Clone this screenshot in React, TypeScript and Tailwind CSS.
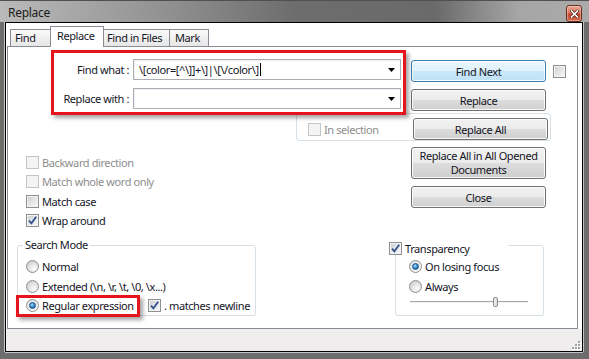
import React from "react";

function CheckBox({ checked = false, disabled = false }: { checked?: boolean; disabled?: boolean }) {
  return (
    <span
      className={
        disabled
          ? "relative block h-[13px] w-[13px] shrink-0 border border-[#c3c5c7] bg-[#f4f4f4]"
          : "relative block h-[13px] w-[13px] shrink-0 border border-[#8e8f8f] bg-[linear-gradient(135deg,#c6c9cd_0%,#e2e3e5_45%,#f8f8f8_100%)] shadow-[inset_0_0_0_1px_#f3f3f3]"
      }
    >
      {checked && (
        <svg className="absolute left-0 top-0" width="11" height="11" viewBox="0 0 11 11">
          <path d="M2 5.6 L4.4 8.4 L9.2 1.8" fill="none" stroke="#34508f" strokeWidth="1.8" />
        </svg>
      )}
    </span>
  );
}

function Radio({ checked = false }: { checked?: boolean }) {
  return (
    <span
      className={
        checked
          ? "flex h-[13px] w-[13px] shrink-0 items-center justify-center rounded-full border border-[#8e8f8f] bg-[radial-gradient(circle_at_60%_65%,#ffffff_0%,#eeeeee_55%,#d4d4d4_100%)]"
          : "flex h-[13px] w-[13px] shrink-0 items-center justify-center rounded-full border border-[#8e8f8f] bg-[radial-gradient(circle_at_65%_70%,#fdfdfd_0%,#e4e4e4_45%,#c4c4c4_100%)]"
      }
    >
      {checked && (
        <span className="block h-[7px] w-[7px] rounded-full border border-[#1b4c86] bg-[radial-gradient(circle_at_40%_35%,#b4e2fa_0%,#3b93d4_45%,#0f4a8a_100%)]" />
      )}
    </span>
  );
}

function Button({
  children,
  primary = false,
  tall = false,
  className = "",
}: {
  children: React.ReactNode;
  primary?: boolean;
  tall?: boolean;
  className?: string;
}) {
  const base =
    "flex w-[135px] shrink-0 flex-col items-center justify-center rounded-[3px] border text-center leading-[13px] text-[#15151f] shadow-[inset_0_0_0_1px_rgba(255,255,255,0.85)]";
  const h = tall ? "h-[32px]" : "h-[22px]";
  const skin = primary
    ? "border-[#3c7fb1] bg-[linear-gradient(#ebf6fd_0%,#dff1fb_50%,#cbe8f8_50%,#bfe2f5_100%)]"
    : "border-[#707070] bg-[linear-gradient(#f2f2f2_0%,#ebebeb_50%,#dddddd_50%,#cfcfcf_100%)]";
  return <div className={`${base} ${h} ${skin} ${className}`}>{children}</div>;
}

function Combo({ value, caret = false, className = "" }: { value: string; caret?: boolean; className?: string }) {
  return (
    <div
      className={`flex h-[21px] w-[268px] shrink-0 items-center border border-[#abadb3] bg-white pl-[5px] pr-[5px] shadow-[inset_1px_1px_0_#eef0f3] ${className}`}
    >
      <span className="whitespace-pre leading-[14px]">{value}</span>
      {caret && <span className="ml-[1px] block h-[13px] w-[1px] bg-black" />}
      <svg className="ml-auto" width="7" height="4" viewBox="0 0 7 4">
        <path d="M0 0 H7 L3.5 4 Z" fill="#000" />
      </svg>
    </div>
  );
}

function Grip() {
  const dots: [number, number][] = [
    [6, 0],
    [3, 3],
    [6, 3],
    [0, 6],
    [3, 6],
    [6, 6],
  ];
  return (
    <svg width="9" height="9" viewBox="0 0 9 9">
      {dots.map(([x, y], i) => (
        <g key={i}>
          <rect x={x + 1} y={y + 1} width="2" height="2" fill="#ffffff" />
          <rect x={x} y={y} width="2" height="2" fill="#a3a3a3" />
        </g>
      ))}
    </svg>
  );
}

export default function App() {
  return (
    <div className="flex h-[359px] w-[589px] flex-col overflow-hidden bg-[#6d6d6d] font-['Noto_Sans',sans-serif] text-[11px] tracking-[-0.4px] text-[#15151f]">
      {/* Title bar */}
      <div className="flex h-[22px] shrink-0 items-start border-t border-[#505050] bg-[linear-gradient(90deg,#bababa_0%,#8e8e8e_30%,#6d6d6d_50%,#6a6a6a_74%,#a6a6a6_88%,#aaaaaa_100%)]">
        <span className="ml-[8px] mt-[4px] text-[12px] leading-[15px] tracking-[-0.3px] text-[#1b1b1b]">Replace</span>
        <div className="ml-auto mr-[7px] mt-[4px] flex h-[17px] w-[16px] items-center justify-center rounded-[3px] border border-[#6b2a1e] bg-[linear-gradient(#e9a896_0%,#d6735a_45%,#c4452b_55%,#d86a4f_100%)] shadow-[inset_0_0_0_1px_rgba(255,255,255,0.35)]">
          <svg width="9" height="8" viewBox="0 0 9 8">
            <path d="M1.5 1 L7.5 7 M7.5 1 L1.5 7" stroke="#4a2018" strokeWidth="3" strokeLinecap="square" />
            <path d="M1.5 1 L7.5 7 M7.5 1 L1.5 7" stroke="#ffffff" strokeWidth="1.6" strokeLinecap="square" />
          </svg>
        </div>
      </div>

      {/* Client area */}
      <div className="ml-[5px] mr-[6px] flex h-[330px] shrink-0 flex-col border border-black bg-white shadow-[-1px_0_0_#c4c4c4,1px_0_0_#c4c4c4,0_1px_0_#c4c4c4]">
        {/* Tabs */}
        <div className="flex h-[23px] shrink-0 items-end pl-[4px]">
          <div className="flex h-[17px] w-[41px] items-center border-l border-r border-t border-[#898c95] bg-[linear-gradient(#fafafa,#e6e6e6)] pl-[4px] leading-[14px]">
            Find
          </div>
          <div className="relative z-10 -mb-px ml-[-1px] flex h-[21px] w-[54px] items-center border-l border-r border-t border-[#898c95] bg-white pb-[2px] pl-[6px] leading-[14px]">
            Replace
          </div>
          <div className="ml-[-1px] flex h-[17px] w-[67px] items-center border-l border-r border-t border-[#898c95] bg-[linear-gradient(#fafafa,#e6e6e6)] pl-[3px] leading-[14px]">
            Find in Files
          </div>
          <div className="ml-[-1px] flex h-[17px] w-[40px] items-center border-l border-r border-t border-[#898c95] bg-[linear-gradient(#fafafa,#e6e6e6)] pl-[5px] leading-[14px]">
            Mark
          </div>
        </div>

        {/* Panel */}
        <div className="relative ml-[1px] h-[283px] w-[571px] shrink-0 border border-[#898c95] bg-white">
          <div className="flex flex-col">
            {/* Row A */}
            <div className="mt-[12px] flex items-start">
              <div className="flex h-[21px] w-[121px] shrink-0 items-center justify-end leading-[14px]">Find what :</div>
              <Combo className="ml-[4px]" value={"\\[color=[^\\]]+\\]|\\[\\/color\\]"} caret />
              <Button primary className="ml-[10px] mt-[1px]">
                Find Next
              </Button>
              <div className="ml-[7px] mt-[6px]">
                <CheckBox />
              </div>
            </div>

            {/* Row B */}
            <div className="mt-[6px] flex items-start">
              <div className="flex h-[21px] w-[121px] shrink-0 items-center justify-end leading-[14px]">Replace with :</div>
              <Combo className="ml-[4px]" value="" />
              <Button className="ml-[10px] mt-[1px]">Replace</Button>
            </div>

            {/* Row C: In selection group */}
            <div className="ml-[288px] mt-[2px] flex h-[28px] w-[255px] items-start rounded-[3px] border border-[#d5dfe5] pl-[11px] pr-[2px]">
              <div className="mt-[9px] flex items-center">
                <CheckBox disabled />
                <span className="ml-[3px] leading-[13px] text-[#8d8d8d]">In selection</span>
              </div>
              <Button className="ml-auto mt-[4px]">Replace All</Button>
            </div>

            {/* Section 2 */}
            <div className="flex items-start">
              <div className="flex w-[403px] shrink-0 flex-col pl-[18px] pt-[15px]">
                <div className="flex h-[13px] items-center">
                  <CheckBox disabled />
                  <span className="ml-[3px] leading-[13px] text-[#8d8d8d]">Backward direction</span>
                </div>
                <div className="mt-[6px] flex h-[13px] items-center">
                  <CheckBox disabled />
                  <span className="ml-[3px] leading-[13px] text-[#8d8d8d]">Match whole word only</span>
                </div>
                <div className="mt-[7px] flex h-[13px] items-center">
                  <CheckBox />
                  <span className="ml-[3px] leading-[13px]">Match case</span>
                </div>
                <div className="mt-[6px] flex h-[13px] items-center">
                  <CheckBox checked />
                  <span className="ml-[3px] leading-[13px]">Wrap around</span>
                </div>
              </div>
              <div className="flex flex-col pt-[6px]">
                <Button tall>
                  <span className="block leading-[14px]">Replace All in All Opened</span>
                  <span className="block leading-[14px]">Documents</span>
                </Button>
                <Button className="mt-[7px]">Close</Button>
              </div>
            </div>

            {/* Section 3 */}
            <div className="mt-[18px] flex items-start">
              {/* Search Mode */}
              <div className="relative ml-[9px] h-[71px] w-[239px] shrink-0 rounded-[3px] border border-[#d5dfe5]">
                <span className="absolute left-[5px] top-[-8px] bg-white px-[2px] leading-[14px]">Search Mode</span>
                <div className="flex flex-col pl-[8px] pt-[14px]">
                  <div className="flex h-[13px] items-center">
                    <Radio />
                    <span className="ml-[3px] leading-[13px]">Normal</span>
                  </div>
                  <div className="mt-[7px] flex h-[13px] items-center">
                    <Radio />
                    <span className="ml-[3px] leading-[13px]">{"Extended (\\n, \\r, \\t, \\0, \\x...)"}</span>
                  </div>
                  <div className="mt-[6px] flex h-[13px] items-center">
                    <div className="flex w-[122px] shrink-0 items-center">
                      <Radio checked />
                      <span className="ml-[3px] leading-[13px]">Regular expression</span>
                    </div>
                    <CheckBox checked />
                    <span className="ml-[3px] leading-[13px]">. matches newline</span>
                  </div>
                </div>
              </div>

              {/* Transparency */}
              <div className="relative ml-[139px] h-[71px] w-[149px] shrink-0 rounded-[3px] border border-[#d5dfe5]">
                <div className="absolute left-[-7px] top-[-4px] flex h-[13px] w-[119px] items-center bg-white">
                  <CheckBox checked />
                  <span className="ml-[3px] leading-[13px]">Transparency</span>
                </div>
                <div className="flex flex-col pl-[13px] pt-[14px]">
                  <div className="flex h-[13px] items-center">
                    <Radio checked />
                    <span className="ml-[3px] leading-[13px]">On losing focus</span>
                  </div>
                  <div className="mt-[7px] flex h-[13px] items-center">
                    <Radio />
                    <span className="ml-[3px] leading-[13px]">Always</span>
                  </div>
                  <div className="relative ml-[1px] mt-[3px] h-[12px] w-[118px]">
                    <div className="absolute left-0 right-0 top-[5px] h-[2px] border-t border-[#a7a7a7] bg-[#f0f0f0]" />
                    <div className="absolute left-[83px] top-[1px] h-[10px] w-[5px] rounded-[2px] border border-[#8e8f8f] bg-[linear-gradient(90deg,#f4f4f4,#d8d8d8)]" />
                  </div>
                </div>
              </div>
            </div>
          </div>

          {/* Red highlight annotations */}
          <div className="pointer-events-none absolute left-[43px] top-[3px] h-[65px] w-[355px] border-[3px] border-[#e8141b] shadow-[3px_3px_4px_rgba(0,0,0,0.35)]" />
          <div className="pointer-events-none absolute left-[8px] top-[248px] h-[22px] w-[124px] border-[3px] border-[#e8141b] shadow-[3px_3px_4px_rgba(0,0,0,0.35)]" />
        </div>

        {/* Status bar */}
        <div className="flex h-[22px] shrink-0 items-end justify-end bg-[#efeded] pb-[1px] pr-[1px]">
          <Grip />
        </div>
      </div>
    </div>
  );
}
